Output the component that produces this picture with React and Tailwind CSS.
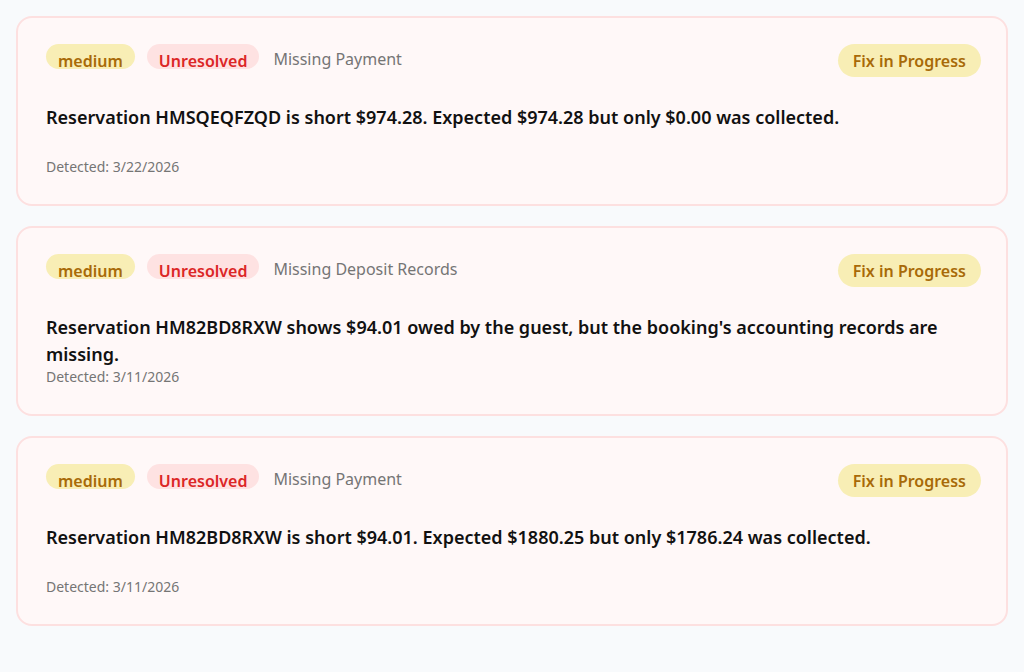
import React from "react";

const issues = [
  {
    id: 1,
    severity: "medium",
    status: "Unresolved",
    type: "Missing Payment",
    message:
      "Reservation HMSQEQFZQD is short $974.28. Expected $974.28 but only $0.00 was collected.",
    detected: "3/22/2026",
  },
  {
    id: 2,
    severity: "medium",
    status: "Unresolved",
    type: "Missing Deposit Records",
    message:
      "Reservation HM82BD8RXW shows $94.01 owed by the guest, but the booking's accounting records are missing.",
    detected: "3/11/2026",
  },
  {
    id: 3,
    severity: "medium",
    status: "Unresolved",
    type: "Missing Payment",
    message:
      "Reservation HM82BD8RXW is short $94.01. Expected $1880.25 but only $1786.24 was collected.",
    detected: "3/11/2026",
  },
];

function IssueCard({ issue }) {
  return (
    <div className="h-[190px] rounded-2xl border-2 border-[#fde0e0] bg-[#fff8f8] pl-7 pr-[25px] pt-[26px]">
      <div className="flex h-[33px] items-start justify-between">
        <div className="flex items-start gap-3">
          <span className="h-[25px] rounded-full bg-[#f8eeb5] px-3 pt-[5px] text-base font-semibold leading-6 text-[#a86a08]">
            {issue.severity}
          </span>
          <span className="h-[25px] rounded-full bg-[#fee2e2] px-3 pt-[5px] text-base font-semibold leading-6 text-[#dc2626]">
            {issue.status}
          </span>
          <span className="ml-[2px] pt-[3px] text-base leading-6 text-[#757575]">{issue.type}</span>
        </div>
        <button className="h-[33px] rounded-full bg-[#f8eeb5] px-[15px] pt-[1px] text-base font-semibold leading-6 text-[#a86a08]">
          Fix in Progress
        </button>
      </div>
      <div className="mt-[27px] h-[53px] text-lg font-semibold leading-[27px] text-[#111111]">
        {issue.message}
      </div>
      <div className="text-sm leading-5 text-[#757575]">Detected: {issue.detected}</div>
    </div>
  );
}

export default function App() {
  return (
    <div
      className="min-h-screen bg-[#f8fafc] p-4"
      style={{ fontFamily: '"Noto Sans", "Open Sans", sans-serif' }}
    >
      <div className="flex flex-col gap-5">
        {issues.map((issue) => (
          <IssueCard key={issue.id} issue={issue} />
        ))}
      </div>
    </div>
  );
}
